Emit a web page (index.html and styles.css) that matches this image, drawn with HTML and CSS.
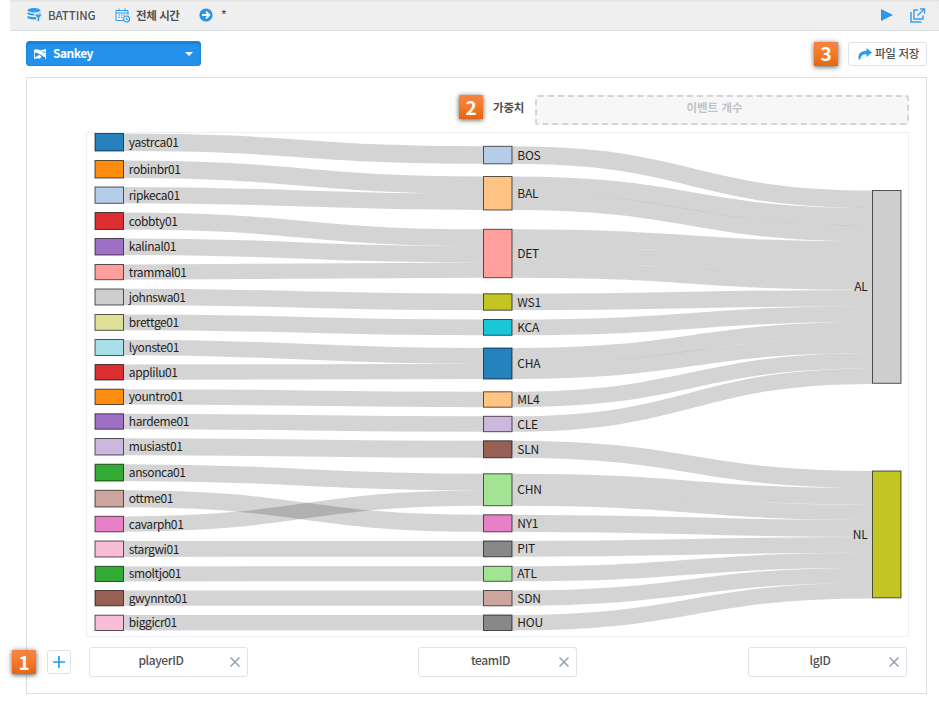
FILE: index.html
```html
<!DOCTYPE html>
<html lang="ko">
<head>
<meta charset="utf-8">
<title>Sankey</title>
<link rel="stylesheet" href="styles.css">
</head>
<body>
<header class="topbar">
  <svg class="icon-db" width="16" height="14" viewBox="0 0 16 14">
    <g fill="#2b9cf0"><ellipse cx="7" cy="2.3" rx="6.5" ry="2.2"/><path d="M.5 4c2 2 11 2 13 0v1.6H6.6l1.2 1.8C4 7.5 1 7 .5 6zM.5 7.8c1.700 1.200 5 1.400 8 1.200l.8 1v1.400C5 11.800 1.200 11 .5 9.800z"/><path d="M7.300 6.200h8l-2.800 3.500V13l-2.200.6V9.700z" stroke="#efefef" stroke-width=".5"/></g>
  </svg>
  <span class="topbar-name">BATTING</span>
  <svg class="icon-cal" width="16" height="15" viewBox="0 0 16 15" fill="none" stroke="#2b9cf0">
    <path d="M8 12.500H1V2.500h12V7M1 5h12M4 .5v3M10 .5v3"/><path d="M3.500 7h7M3.500 9.300h4.500" stroke-dasharray="1.500 1"/><circle cx="11.500" cy="11" r="3" fill="#efefef" stroke-width="1.200"/><path d="M11.500 9.500V11.300H13"/>
  </svg>
  <span class="topbar-time">전체 시간</span>
  <svg class="icon-go" width="14" height="14" viewBox="0 0 14 14"><circle cx="7" cy="7" r="6.600" fill="#2b93e8"/><path d="M3 7h7M7 3.700 10.300 7 7 10.300" fill="none" stroke="#fff" stroke-width="1.800"/></svg>
  <span class="topbar-star">*</span>
  <svg class="icon-play" width="12" height="12" viewBox="0 0 12 12"><path d="M0 0 12 6 0 12z" fill="#2b96ee"/></svg>
  <svg class="icon-open" width="16" height="15" viewBox="0 0 16 15" fill="none" stroke="#3ba0ef" stroke-width="1.500"><path d="M1 4v10h10.500"/><path d="M8 2H4v9h9V7.500M7.500 7.500 14 1.200M9.800 1H14.500V5.700"/></svg>
</header>
<main class="content">
  <div class="toolbar">
    <div class="select">
      <svg width="12" height="10" viewBox="0 0 12 10"><path d="M.5 1v9M11.500 0v10" stroke="#fff" stroke-width=".8"/><path d="M.5.5H4C6.500.5 8 3.500 11.500 4V8C7 7.500 5.500 3.500.5 3.500zM.5 9.500V8C3 8 3.500 6.500 5 5.700L7.500 7.800 6 9.500zM6.500 1.200 11.500.3V2.700L8.700 2.400z" fill="#fff"/></svg>
      <span>Sankey</span>
      <svg class="caret" width="8" height="4" viewBox="0 0 8 4"><path d="M0 0h8L4 4z" fill="#fff"/></svg>
    </div>
    <span class="badge">3</span>
    <div class="save">
      <svg width="14" height="12" viewBox="0 0 14 12"><path d="M8.500 0 14 4.500 8.500 9V6.300C5 6 3 7.500 2.200 11.500H.8C-.8 6 3 2.700 8.500 2.700z" fill="#2b9cf0"/></svg>
      <span>파일 저장</span>
    </div>
  </div>
  <section class="panel">
    <div class="weight">
      <span class="badge">2</span>
      <span class="weight-label">가중치</span>
      <div class="drop">이벤트 개수</div>
    </div>
    <svg class="chart" id="chart" width="823" height="505" viewBox="86 132 823 505"></svg>
    <div class="fields">
      <div class="add"><svg width="12" height="12" viewBox="0 0 12 12"><path d="M6 0v12M0 6h12" stroke="#1e9df5" stroke-width="1.700"/></svg></div>
      <div class="field"><span>playerID</span><svg width="10" height="10" viewBox="0 0 10 10"><path d="m.5.5 9 9m0-9-9 9"/></svg></div>
      <div class="field"><span>teamID</span><svg width="10" height="10" viewBox="0 0 10 10"><path d="m.5.5 9 9m0-9-9 9"/></svg></div>
      <div class="field"><span>lgID</span><svg width="10" height="10" viewBox="0 0 10 10"><path d="m.5.5 9 9m0-9-9 9"/></svg></div>
    </div>
    <span class="badge badge-add">1</span>
  </section>
</main>
<script src="sankey.js"></script>
</body>
</html>
```

FILE: styles.css
```css
* { box-sizing: border-box; }
body {
  margin: 0;
  width: 939px;
  height: 708px;
  overflow: hidden;
  background: #fff;
  color: #505050;
  font: 500 12px/18px "Noto Sans CJK KR", sans-serif;
}
svg { display: block; flex: none; }
.topbar {
  display: flex;
  align-items: center;
  height: 31px;
  margin-left: 10px;
  padding: 0 13px 0 17px;
  background: #efefef;
  border-bottom: 1px solid #d9e0e2;
  box-shadow: inset 0 2px 2px -1px #ddd;
  white-space: nowrap;
}
.topbar-name { width: 49px; margin: -1px 18px 0 5px; font-size: 11.5px; letter-spacing: -.1px; }
.topbar-time { width: 44px; margin: -1px 19px 0 5px; font-size: 11.5px; font-weight: 600; letter-spacing: -.4px; }
.topbar-star { margin: -3px 0 0 8px; }
.icon-play { margin-left: auto; margin-right: 17px; }
.content { padding: 10px 12px 0 26px; }
.toolbar { display: flex; align-items: center; height: 25px; }
.select {
  display: flex;
  align-items: center;
  width: 175px;
  height: 25px;
  padding: 0 7px;
  border-radius: 3px;
  background: #2492ea;
  border: 1px solid #1f86da;
  box-shadow: inset 0 2px 2px #1b7fcd;
  color: #fff;
  font-weight: 700;
}
.select span { margin: -2px 0 0 7px; letter-spacing: -.5px; }
.caret { margin-left: auto; }
.badge {
  display: flex;
  align-items: center;
  justify-content: center;
  flex: none;
  width: 24px;
  height: 24px;
  padding-bottom: 1px;
  background: linear-gradient(#f48444, #f57a28 50%, #e3660f);
  box-shadow: 0 1px 5px rgba(0, 0, 0, .65);
  color: #fff;
  font: 700 19px/24px "Noto Sans CJK KR", sans-serif;
}
.toolbar .badge { margin-left: auto; margin-right: 10px; }
.save {
  display: flex;
  align-items: center;
  gap: 3px;
  width: 79px;
  height: 24px;
  padding-left: 9px;
  border: 1px solid #dfe3e9;
  border-radius: 3px;
  white-space: nowrap;
  font-size: 11.5px;
  letter-spacing: -.3px;
}
.save span { margin-top: -2px; }
.panel {
  position: relative;
  width: 901px;
  height: 617px;
  margin-top: 11px;
  padding: 16px 17px 0 0;
  border: 1px solid #dcdfe3;
}
.weight { display: flex; align-items: center; height: 31px; margin-left: 432px; }
.weight .badge { margin-top: -5px; }
.weight-label { width: 33px; margin: -6px 9px 0 10px; font-size: 11.5px; font-weight: 600; letter-spacing: -.2px; white-space: nowrap; }
.drop {
  flex: 1;
  height: 30px;
  padding-right: 15px;
  border: 2px dashed #d3d6d9;
  border-radius: 3px;
  background: #f7f7f7;
  color: #bfc4ca;
  font-size: 11.5px;
  font-weight: 600;
  line-height: 21px;
  text-align: center;
}
.chart {
  width: 823px;
  height: 505px;
  margin: 7px 0 0 59px;
  outline: 1px solid #eff0f7;
  outline-offset: -1px;
}
.chart text { fill: #1e1e1e; font: 400 12px "Noto Sans CJK KR", sans-serif; letter-spacing: -.25px; }
.chart .player { letter-spacing: -.4px; }
.link { fill: none; stroke: #000; stroke-opacity: .17; }
.node { stroke: #000; stroke-opacity: .65; }
.fields { display: flex; align-items: center; height: 30px; margin: 10px 0 0 20px; }
.add {
  display: flex;
  align-items: center;
  justify-content: center;
  width: 24px;
  height: 24px;
  margin-right: 17.5px;
  border: 1px solid #dfe3e9;
  border-radius: 3px;
}
.field {
  display: flex;
  align-items: center;
  width: 159px;
  height: 30px;
  margin-right: 170.5px;
  padding-right: 7px;
  border: 1px solid #dfe3e9;
  border-radius: 3px;
  flex: none;
}
.field:last-child { margin-right: 0; }
.field span { flex: 1; margin-top: -5px; padding-left: 3px; text-align: center; letter-spacing: -.4px; }
.field path { stroke: #91a1b3; stroke-width: 1.5; }
.badge-add { position: absolute; left: -15px; top: 572px; }
```

FILE: sankey.js
```js
// name, top, bottom, colour, target team
const players = [
  ['yastrca01', 133.5, 151, '#2582bd', 'BOS'],
  ['robinbr01', 160.5, 178, '#ff8c0e', 'BAL'],
  ['ripkeca01', 187, 203.3, '#b6cdea', 'BAL'],
  ['cobbty01', 212.5, 229.5, '#dc2d30', 'DET'],
  ['kalinal01', 238.5, 255, '#9e70c4', 'DET'],
  ['trammal01', 264.5, 279.7, '#ffa09e', 'DET'],
  ['johnswa01', 289, 305, '#cecece', 'WS1'],
  ['brettge01', 314.5, 330.3, '#dfe097', 'KCA'],
  ['lyonste01', 339.5, 355.5, '#a8e0ea', 'CHA'],
  ['applilu01', 364.5, 380, '#dc2d30', 'CHA'],
  ['yountro01', 389.2, 404.5, '#ff8c0e', 'ML4'],
  ['hardeme01', 413.8, 429.2, '#9e70c4', 'CLE'],
  ['musiast01', 438.5, 455, '#cbb8dc', 'SLN'],
  ['ansonca01', 464.2, 481, '#33aa33', 'CHN'],
  ['ottme01', 490.3, 507, '#cba69e', 'NY1'],
  ['cavarph01', 516.3, 531.8, '#e780c8', 'CHN'],
  ['stargwi01', 541, 557, '#f8bcd7', 'PIT'],
  ['smoltjo01', 566.3, 581.5, '#33aa33', 'ATL'],
  ['gwynnto01', 590.5, 605.8, '#976054', 'SDN'],
  ['biggicr01', 615.2, 630.5, '#f8bcd7', 'HOU']
];
// name, top, bottom, colour, target league
const teams = [
  ['BOS', 146.3, 163.8, '#b6cdea', 'AL'],
  ['BAL', 176.5, 210, '#ffc383', 'AL'],
  ['DET', 229.3, 277.7, '#ffa09e', 'AL'],
  ['WS1', 293.8, 310.2, '#c3c523', 'AL'],
  ['KCA', 319.5, 335.3, '#1bc6d8', 'AL'],
  ['CHA', 348, 379, '#2582bd', 'AL'],
  ['ML4', 391.8, 407.2, '#ffc383', 'AL'],
  ['CLE', 416.3, 431.7, '#cbb8dc', 'AL'],
  ['SLN', 440.8, 457.8, '#976054', 'NL'],
  ['CHN', 473.8, 505.7, '#a2e493', 'NL'],
  ['NY1', 514.8, 531.8, '#e780c8', 'NL'],
  ['PIT', 541, 556.8, '#888', 'NL'],
  ['ATL', 566.3, 581.3, '#a2e493', 'NL'],
  ['SDN', 590.5, 605.8, '#cba69e', 'NL'],
  ['HOU', 615, 630.5, '#888', 'NL']
];
const leagues = [
  ['AL', 190.5, 383.3, '#cecece'],
  ['NL', 471, 597.8, '#c3c523']
];
const W = 28.5, X = [95, 483.5, 872.5];
let links = '', nodes = '';

function link(x0, y0, x1, y1, w) {
  const m = (x0 + x1) / 2;
  links += `<path class="link" d="M${x0} ${y0}C${m} ${y0} ${m} ${y1} ${x1} ${y1}" stroke-width="${w}"/>`;
}
function node(n, x, kind) {
  const end = kind === 'league';
  nodes += `<rect class="node" x="${x}" y="${n[1]}" width="${W}" height="${n[2] - n[1]}" fill="${n[3]}"/>`;
  nodes += `<text class="${kind}" x="${end ? x - 5 : x + W + 5.3}" y="${(n[1] + n[2]) / 2 + 4.5}"${end ? ' text-anchor="end"' : ''}>${n[0]}</text>`;
}
const offset = {};
leagues.forEach(l => { offset[l[0]] = l[1]; });
teams.forEach(t => {
  const sources = players.filter(p => p[4] === t[0]);
  const total = sources.reduce((s, p) => s + p[2] - p[1], 0);
  let y = t[1];
  sources.forEach(p => {
    const w = (p[2] - p[1]) * (t[2] - t[1]) / total;
    link(X[0] + W, (p[1] + p[2]) / 2, X[1], y + w / 2, w);
    link(X[1] + W, y + w / 2, X[2], offset[t[4]] + w / 2, w);
    y += w;
    offset[t[4]] += w;
  });
});
players.forEach(n => node(n, X[0], 'player'));
teams.forEach(n => node(n, X[1], 'team'));
leagues.forEach(n => node(n, X[2], 'league'));
document.getElementById('chart').innerHTML = links + nodes;
```
